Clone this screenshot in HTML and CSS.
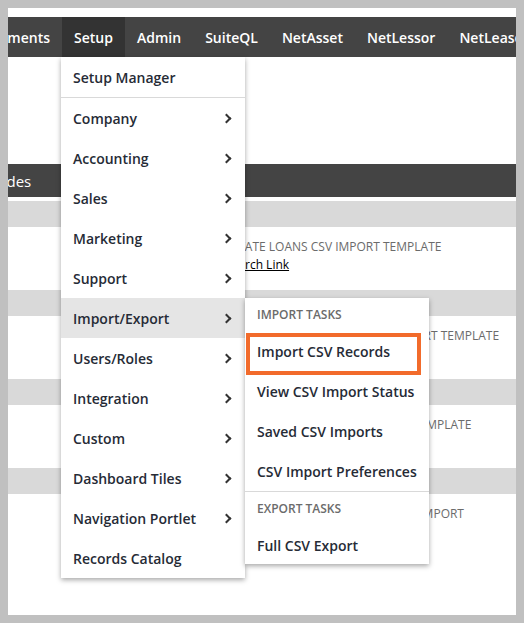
FILE: index.html
```html
<!DOCTYPE html>
<html>
<head>
<meta charset="utf-8">
<link rel="stylesheet" href="styles.css">
</head>
<body>
<div class="page">
  <div class="topgap"></div>
  <nav class="navbar">
    <div class="nav-item nav-first"><span>Documents</span></div>
    <div class="nav-item active">Setup</div>
    <div class="nav-item">Admin</div>
    <div class="nav-item">SuiteQL</div>
    <div class="nav-item">NetAsset</div>
    <div class="nav-item">NetLessor</div>
    <div class="nav-item">NetLease</div>
  </nav>
  <div class="content">
    <div class="blank"></div>
    <div class="section-bar"><span>Codes</span></div>
    <div class="thin-gap"></div>
    <div class="band"></div>
    <div class="row">
      <div class="cell">
        <div class="label">ESTATE LOANS CSV IMPORT TEMPLATE</div>
        <a class="link" href="#">Search Link</a>
      </div>
    </div>
    <div class="band"></div>
    <div class="row">
      <div class="cell"><div class="label">EQUIPMENT LEASE LINES CSV IMPORT TEMPLATE</div></div>
    </div>
    <div class="band"></div>
    <div class="row">
      <div class="cell"><div class="label">ANNUAL PAYMENTS CSV IMPORT TEMPLATE</div></div>
    </div>
    <div class="band"></div>
    <div class="row">
      <div class="cell"><div class="label">TOTAL ASSETS DEPRECIATION CSV IMPORT</div></div>
    </div>
  </div>

  <ul class="menu main-menu">
    <li class="item first">Setup Manager</li>
    <li class="item sub">Company<span class="chev"></span></li>
    <li class="item sub">Accounting<span class="chev"></span></li>
    <li class="item sub">Sales<span class="chev"></span></li>
    <li class="item sub">Marketing<span class="chev"></span></li>
    <li class="item sub">Support<span class="chev"></span></li>
    <li class="item sub hover">Import/Export<span class="chev"></span></li>
    <li class="item sub">Users/Roles<span class="chev"></span></li>
    <li class="item sub">Integration<span class="chev"></span></li>
    <li class="item sub">Custom<span class="chev"></span></li>
    <li class="item sub">Dashboard Tiles<span class="chev"></span></li>
    <li class="item sub">Navigation Portlet<span class="chev"></span></li>
    <li class="item">Records Catalog</li>
  </ul>

  <ul class="menu sub-menu">
    <li class="heading">IMPORT TASKS</li>
    <li class="item">Import CSV Records</li>
    <li class="item">View CSV Import Status</li>
    <li class="item">Saved CSV Imports</li>
    <li class="item">CSV Import Preferences</li>
    <li class="heading sep">EXPORT TASKS</li>
    <li class="item last">Full CSV Export</li>
  </ul>

  <div class="highlight-box"></div>
</div>
</body>
</html>
```

FILE: styles.css
```css
* { box-sizing: border-box; }
html, body { margin: 0; padding: 0; }
body {
  background: #c0c0c0;
  font-family: "Open Sans", "DejaVu Sans", sans-serif;
}
.page {
  margin: 8px;
  width: 508px;
  height: 607px;
  background: #ffffff;
  position: relative;
  overflow: hidden;
}
.topgap { height: 9px; }
.navbar {
  height: 40px;
  background: #444444;
  display: flex;
  align-items: stretch;
  white-space: nowrap;
}
.nav-item {
  display: flex;
  align-items: center;
  padding: 1px 12px 0 12px;
  color: #ffffff;
  font-size: 14px;
  font-weight: 600;
  flex: none;
}
.nav-first {
  width: 54px;
  padding: 1px 12px 0 0;
  justify-content: flex-end;
  overflow: hidden;
}
.nav-first span { flex: none; }
.nav-item.active {
  background: #333333;
  width: 63px;
  padding: 1px 0 0 0;
  justify-content: center;
}

.content { display: flex; flex-direction: column; }
.blank { height: 107px; }
.section-bar {
  height: 33px;
  background: #444444;
  display: flex;
  align-items: center;
  overflow: hidden;
  color: #ffffff;
  font-size: 15px;
  white-space: nowrap;
}
.section-bar span { flex: none; margin-left: -20px; }
.thin-gap { height: 4px; }
.band { height: 26px; background: #d9d9d9; }
.row { height: 63px; display: flex; }
.cell {
  padding: 11px 0 0 217px;
  display: flex;
  flex-direction: column;
  align-items: flex-start;
  white-space: nowrap;
}
.label {
  font-size: 12px;
  line-height: 18px;
  color: #6b6b6b;
}
.link {
  font-size: 12px;
  line-height: 18px;
  color: #000000;
  text-decoration: underline;
}

.menu {
  list-style: none;
  margin: 0;
  padding: 0;
  position: absolute;
  background: #ffffff;
  width: 184px;
  box-shadow: 0 2px 5px rgba(0, 0, 0, 0.35);
}
.main-menu { left: 53px; top: 49px; }
.sub-menu { left: 237px; top: 290px; }
.item {
  height: 40px;
  display: flex;
  align-items: center;
  justify-content: space-between;
  padding: 0 12px;
  font-size: 14px;
  font-weight: 600;
  color: #262b36;
  white-space: nowrap;
}
.item.first { height: 41px; border-bottom: 1px solid #d9d9d9; }
.item.hover { background: #e5e5e5; }
.chev {
  width: 7px;
  height: 7px;
  border-right: 2px solid #333333;
  border-top: 2px solid #333333;
  transform: rotate(45deg);
  margin-right: 3px;
}
.heading {
  height: 33px;
  display: flex;
  align-items: center;
  padding: 0 12px;
  font-size: 12px;
  font-weight: 600;
  color: #6b6b6b;
}
.heading.sep { height: 34px; border-top: 1px solid #d9d9d9; padding-bottom: 1px; }
.item.last { height: 39px; padding-top: 2px; }

.highlight-box {
  position: absolute;
  left: 238px;
  top: 325px;
  width: 175px;
  height: 42px;
  border: 4px solid #f26b2b;
}
```
